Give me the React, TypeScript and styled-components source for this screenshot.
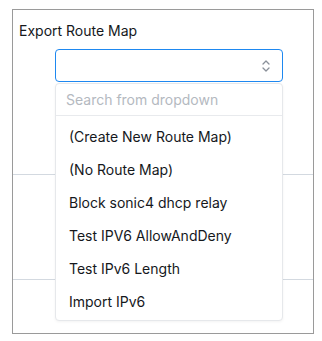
import React from 'react';
import styled, { createGlobalStyle } from 'styled-components';

const GlobalStyle = createGlobalStyle`
	body {
		margin: 0;
		background: #ffffff;
		font-family: Inter, "Noto Sans", sans-serif;
		color: #1f2328;
	}
`;

const PageC = styled.div`
	padding: 9px 0 0 12px;
`;

const FrameC = styled.div`
	position: relative;
	width: 302px;
	height: 325px;
	box-sizing: border-box;
	border: 1px solid #9a9a9a;
`;

const LabelC = styled.div`
	padding: 11px 0 0 6px;
	font-size: 14px;
	line-height: 20px;
	color: #15181c;
`;

const SelectRowC = styled.div`
	padding: 8px 0 0 42px;
`;

const SelectC = styled.div`
	width: 228px;
	height: 33px;
	box-sizing: border-box;
	border: 1px solid #1e88f0;
	border-radius: 4px;
	display: flex;
	align-items: center;
	justify-content: flex-end;
	padding-right: 11px;
`;

const RowLineC = styled.div<{ $top: number }>`
	margin-top: ${(p) => p.$top}px;
	border-top: 1px solid #d3d9e0;
`;

const MenuC = styled.div`
	position: absolute;
	top: 73px;
	left: 42px;
	width: 228px;
	height: 238px;
	box-sizing: border-box;
	background: #ffffff;
	border: 1px solid #e6e8eb;
	border-radius: 4px;
	box-shadow: 0 1px 3px rgba(0, 0, 0, 0.05);
	display: flex;
	flex-direction: column;
`;

const SearchC = styled.div`
	height: 32px;
	box-sizing: border-box;
	border-bottom: 1px solid #e8eaed;
	padding-left: 10px;
	display: flex;
	align-items: center;
	font-size: 14px;
	color: #b4b9bf;
`;

const ListC = styled.div`
	padding-top: 4px;
`;

const ItemC = styled.div`
	height: 33px;
	display: flex;
	align-items: center;
	padding-left: 13px;
	font-size: 14px;
	color: #15181c;
`;

const items = [
	'(Create New Route Map)',
	'(No Route Map)',
	'Block sonic4 dhcp relay',
	'Test IPV6 AllowAndDeny',
	'Test IPv6 Length',
	'Import IPv6',
];

function UpDownIcon() {
	return (
		<svg width="10" height="14" viewBox="0 0 10 14" fill="none" stroke="#8a9099" strokeWidth="1.3" strokeLinecap="round" strokeLinejoin="round">
			<path d="M2 5 L5 2 L8 5" />
			<path d="M2 9 L5 12 L8 9" />
		</svg>
	);
}

function App() {
	return (
		<>
			<GlobalStyle />
			<PageC>
				<FrameC>
					<LabelC>Export Route Map</LabelC>
					<SelectRowC>
						<SelectC>
							<UpDownIcon />
						</SelectC>
					</SelectRowC>
					<RowLineC $top={92} />
					<RowLineC $top={104} />
					<MenuC>
						<SearchC>Search from dropdown</SearchC>
						<ListC>
							{items.map((item) => (
								<ItemC key={item}>{item}</ItemC>
							))}
						</ListC>
					</MenuC>
				</FrameC>
			</PageC>
		</>
	);
}

export default App;
